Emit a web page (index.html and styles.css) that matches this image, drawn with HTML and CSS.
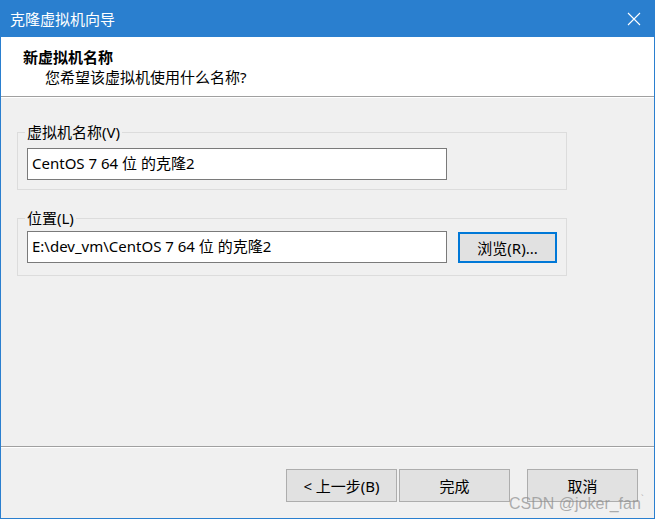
FILE: index.html
```html
<!DOCTYPE html>
<html lang="zh-CN">
<head>
<meta charset="utf-8">
<title>克隆虚拟机向导</title>
<link rel="stylesheet" href="styles.css">
</head>
<body>
<div class="window">
  <div class="titlebar">
    <span class="title">克隆虚拟机向导</span>
    <svg class="close" width="14" height="14" viewBox="0 0 14 14"><path d="M1 1 L13 13 M13 1 L1 13" stroke="#fff" stroke-width="1.1" fill="none"/></svg>
  </div>
  <div class="header">
    <div class="h-title">新虚拟机名称</div>
    <div class="h-sub">您希望该虚拟机使用什么名称?</div>
  </div>
  <div class="content">
    <fieldset class="group g1">
      <legend>虚拟机名称(V)</legend>
      <div class="field">CentOS 7 64 位 的克隆2</div>
    </fieldset>
    <fieldset class="group g2">
      <legend>位置(L)</legend>
      <div class="row">
        <div class="field">E:\dev_vm\CentOS 7 64 位 的克隆2</div>
        <button class="btn browse">浏览(R)...</button>
      </div>
    </fieldset>
  </div>
  <div class="footer">
    <div class="footer-inner">
      <button class="btn">&lt; 上一步(B)</button>
      <button class="btn finish">完成</button>
      <button class="btn cancel">取消</button>
    </div>
  </div>
  <div class="watermark">CSDN @joker_fan<sup>`</sup></div>
</div>
</body>
</html>
```

FILE: styles.css
```css
* { box-sizing: border-box; }
html, body { margin: 0; padding: 0; background: #f0f0f0; }
body {
  font-family: "Noto Sans", "Noto Sans CJK SC", sans-serif;
  font-size: 15px;
  color: #000;
}
.window {
  position: relative;
  width: 655px;
  height: 519px;
  border: 1px solid #2a7fcf;
  border-top: none;
  background: #f0f0f0;
  display: flex;
  flex-direction: column;
  overflow: hidden;
}
.titlebar {
  height: 37px;
  margin: 0 -1px;
  background: #2a7fcf;
  color: #fff;
  display: flex;
  align-items: center;
  justify-content: space-between;
  padding: 0 14px 0 10px;
}
.title { line-height: 20px; }
.close { display: block; }
.header {
  height: 60px;
  background: #fff;
  border-bottom: 1px solid #a0a0a0;
  padding: 10px 0 0 0;
}
.h-title {
  font-weight: bold;
  line-height: 20px;
  padding-left: 22px;
}
.h-sub {
  line-height: 20px;
  padding-left: 44px;
}
.content {
  flex: 1;
  border-top: 1px solid #fff;
  padding: 24px 0 0 16px;
}
.group {
  width: 550px;
  margin: 0;
  border: 1px solid #dcdcdc;
  padding: 6px 9px 9px 9px;
}
.group legend {
  line-height: 20px;
  padding: 0 2px;
  margin-left: -2px;
}
.g2 {
  margin-top: 18px;
  padding: 3px 9px 12px 9px;
}
.field {
  width: 420px;
  height: 32px;
  background: #fff;
  border: 1px solid #7a7a7a;
  padding: 0 0 0 4px;
  line-height: 28px;
  white-space: nowrap;
}
.row {
  display: flex;
  align-items: flex-start;
  gap: 11px;
}
.btn {
  font: inherit;
  color: #000;
  background: #e1e1e1;
  border: 1px solid #adadad;
  width: 111px;
  height: 33px;
  padding: 0;
  line-height: 20px;
}
.browse {
  width: 99px;
  height: 31px;
  margin-top: 1px;
  border: 2px solid #0078d7;
}
.footer {
  height: 72px;
  border-top: 1px solid #a0a0a0;
}
.footer-inner {
  height: 100%;
  border-top: 1px solid #fff;
  padding: 21px 16px 0 0;
  display: flex;
  justify-content: flex-end;
  align-items: flex-start;
  gap: 2px;
}
.cancel { margin-left: 15px; }
.watermark {
  position: absolute;
  left: 508px;
  top: 490px;
  font-family: "Liberation Sans", Arial, sans-serif;
  font-size: 16px;
  line-height: 20px;
  color: rgba(140, 140, 140, 0.7);
  white-space: nowrap;
}
.watermark sup { font-size: 10px; }
```
